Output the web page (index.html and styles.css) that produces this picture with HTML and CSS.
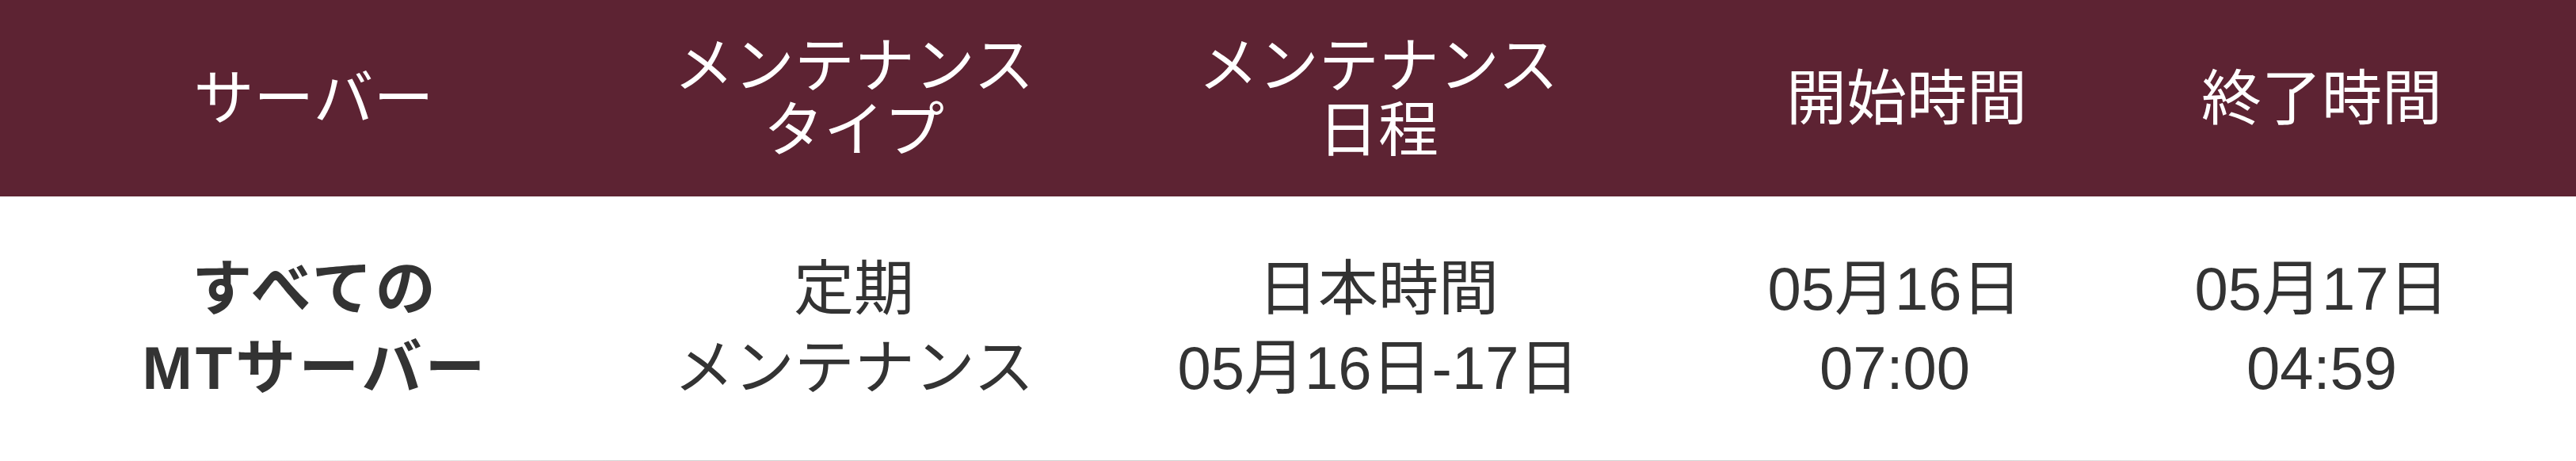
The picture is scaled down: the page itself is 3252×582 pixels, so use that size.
FILE: index.html
```html
<!DOCTYPE html>
<html lang="ja">
<head>
<meta charset="utf-8">
<link rel="stylesheet" href="styles.css">
</head>
<body>
<div class="table">
  <div class="row head">
    <div class="cell c1">サーバー</div>
    <div class="cell c2">メンテナンス<br>タイプ</div>
    <div class="cell c3">メンテナンス<br>日程</div>
    <div class="cell c4 shift">開始時間</div>
    <div class="cell c5">終了時間</div>
  </div>
  <div class="row body">
    <div class="cell c1 strong">すべての<br>MTサーバー</div>
    <div class="cell c2">定期<br>メンテナンス</div>
    <div class="cell c3">日本時間<br>05月16日-17日</div>
    <div class="cell c4">05月16日<br>07:00</div>
    <div class="cell c5">05月17日<br>04:59</div>
  </div>
  <div class="rule"></div>
</div>
</body>
</html>
```

FILE: styles.css
```css
html, body {
  margin: 0;
  padding: 0;
  background: #ffffff;
}
body {
  font-family: "Liberation Sans", "Noto Sans CJK JP", sans-serif;
  font-size: 76px;
}
.table {
  width: 3252px;
}
.row {
  display: grid;
  grid-template-columns: 792px 572px 752px 552px 526px 58px;
}
.cell {
  display: flex;
  align-items: center;
  justify-content: center;
  text-align: center;
}
.head {
  background: #5d2333;
  color: #ffffff;
  height: 248px;
  line-height: 81px;
}
.shift {
  padding-left: 30px;
}
.body {
  color: #333333;
  height: 333px;
  line-height: 100px;
}
.strong {
  font-weight: 700;
  letter-spacing: 4px;
  padding-left: 4px;
}
.rule {
  height: 1px;
  background: linear-gradient(to right, rgba(208,208,208,0) 90px, #d2d2d2 820px, #d2d2d2 2450px, rgba(208,208,208,0) 3195px);
}
```
